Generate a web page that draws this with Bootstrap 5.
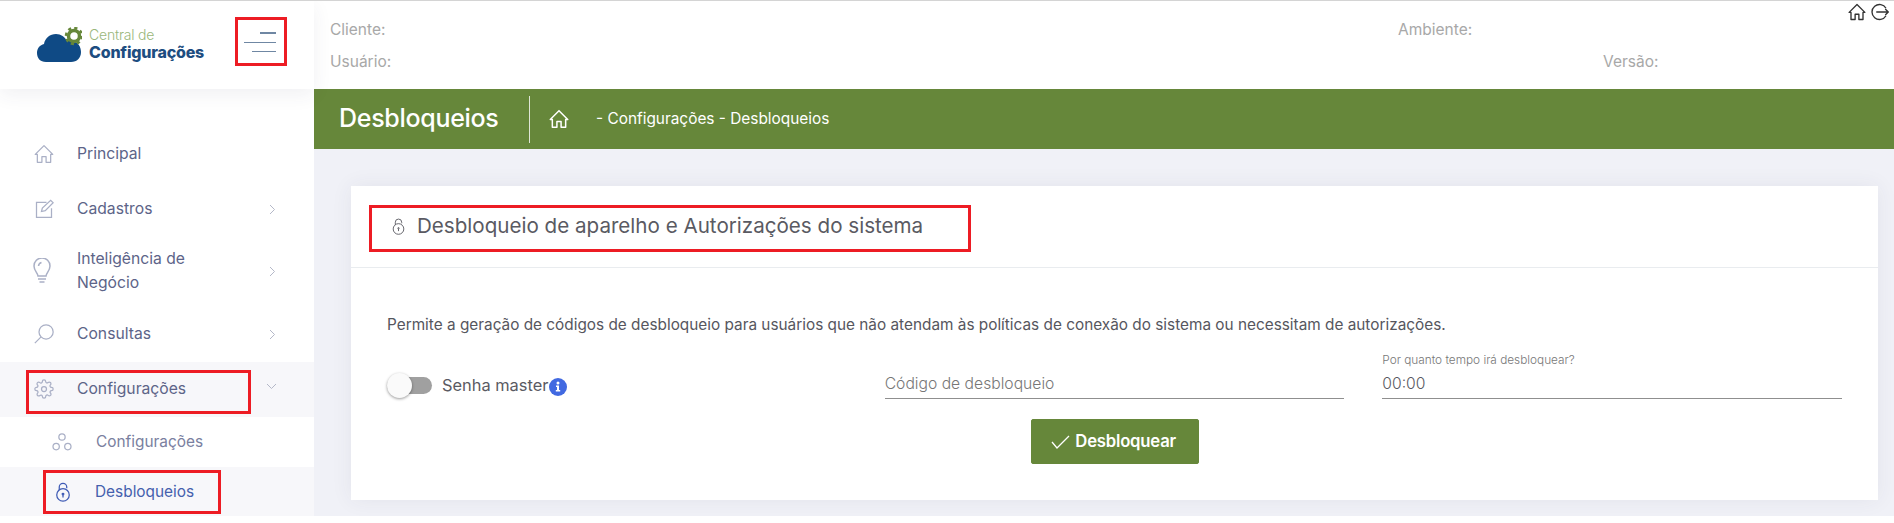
<!DOCTYPE html>
<html lang="pt-BR">
<head>
    <meta charset="UTF-8">
    <meta name="viewport" content="width=device-width, initial-scale=1.0">
    <title>Central de Configurações - Desbloqueios</title>
    <link href="https://cdn.jsdelivr.net/npm/bootstrap@5.3.0/dist/css/bootstrap.min.css" rel="stylesheet">
    <style>
        body { font-family: Inter, "Noto Sans", sans-serif; background: #fff; color: #5a5a62; }
        .mark-red { border: 3px solid #ed1c24; }
        .app-shell { height: 516px; overflow: hidden; border-top: 1px solid #d4d4d4; }

        .app-top { height: 88px; background: #fff; }
        .brand-area { width: 314px; flex: none; padding-left: 37px; position: relative; z-index: 2; box-shadow: 0 6px 18px rgba(60, 60, 90, .07); }
        .brand-text { margin-left: 7px; margin-top: -2px; line-height: 1; }
        .brand-small { font-size: 14px; color: #9ab77b; font-weight: 300; letter-spacing: -.2px; }
        .brand-big { font-size: 16px; font-weight: 800; color: #1d4d80; margin-top: 2px; letter-spacing: -.2px; }
        .menu-toggle { width: 52px; height: 49px; margin-left: 31px; margin-top: -7px; background: none; padding: 0 8px 0 0; display: flex; flex-direction: column; align-items: flex-end; justify-content: center; }
        .menu-toggle span { display: block; background: #6f87a3; height: 1px; margin-top: 8px; }
        .menu-toggle span:nth-child(1) { width: 16px; height: 2px; margin-top: 0; }
        .menu-toggle span:nth-child(2) { width: 32px; }
        .menu-toggle span:nth-child(3) { width: 24px; }
        .top-info { flex: 1; padding: 17px 0 0 16px; font-size: 15.5px; color: #a8a8a8; position: relative; }
        .info-line { height: 32px; }
        .info-ambiente { margin-left: 1068px; }
        .info-versao { margin-left: 1273px; }
        .top-actions { position: absolute; top: 2px; right: 5px; gap: 5px; }

        .side-panel { width: 314px; flex: none; padding-top: 37px; background: #fff; font-size: 15.7px; color: #5d6488; }
        .side-row { display: flex; align-items: center; min-height: 54px; padding-left: 34px; padding-right: 38px; }
        .side-row svg.ico { width: 20px; height: 20px; flex: none; margin-right: 23px; stroke: #aab0c6; fill: none; stroke-width: 1.5; }
        .side-row .arrow { width: 8px; height: 11px; margin-left: auto; flex: none; stroke: #b4b8c8; fill: none; stroke-width: 1; }
        .side-first { min-height: 56px; }
        .side-tall { min-height: 70px; line-height: 24px; }
        .side-tall .side-label { width: 150px; }
        .side-tall svg.ico { width: 18px; height: 26px; margin-left: -1px; margin-right: 26px; }
        .side-consult { min-height: 56px; }
        .side-open { background: #f7f7fa; height: 55px; min-height: 55px; padding-left: 26px; padding-top: 8px; align-items: flex-start; }
        .side-open .mark-red { width: 225px; height: 44px; flex: none; display: flex; align-items: center; padding: 0 0 6px 5px; }
        .side-open .arrow { margin-top: 11px; margin-left: 15px; width: 11px; height: 10px; }
        .side-sub { height: 50px; min-height: 50px; padding-left: 52px; color: #7a80a0; font-size: 15.4px; }
        .side-sub svg.ico { margin-right: 24px; }
        .side-active { height: 49px; min-height: 49px; padding-left: 43px; background: #f7f7fa; color: #4560ad; font-size: 15.4px; }
        .side-active .mark-red { width: 178px; height: 44px; display: flex; align-items: center; padding: 0 0 0 7px; }
        .side-active svg.ico { stroke: #3f5bb5; margin-right: 22px; }

        .main-area { flex: 1; background: #f0f1f7; min-width: 0; }
        .green-bar { height: 60px; background: #66873a; color: #fff; padding-left: 25px; }
        .green-title { font-size: 25px; font-weight: 500; letter-spacing: -.3px; width: 190px; }
        .green-sep { width: 1px; height: 47px; background: #dfe6d6; }
        .green-home { margin-left: 19px; }
        .green-crumb { font-size: 15.4px; font-weight: 400; margin-left: 27px; }
        .panel-box { margin: 37px 16px 16px 37px; border: 0; border-radius: 0; box-shadow: 0 0 20px rgba(60, 60, 90, .07); height: 314px; }
        .panel-head { height: 82px; padding: 19px 18px 0; background: #fff; border-bottom: 1px solid #e9ecef; border-radius: 0 !important; }
        .panel-title { width: 602px; height: 47px; display: flex; align-items: center; padding-left: 18px; font-size: 20.6px; font-weight: 400; color: #5a5a62; padding-bottom: 5px; }
        .panel-title svg { width: 17px; height: 19px; margin-right: 10px; stroke: #5a5a62; fill: none; stroke-width: 1.3; }
        .panel-body { padding: 46px 36px 0; }
        .panel-desc { font-size: 15.35px; color: #56565e; margin-bottom: 0; line-height: 22px; }
        .form-line { --bs-gutter-x: 38px; margin-top: 16px; }
        .toggle-track { display: block; position: relative; width: 45px; height: 17px; border-radius: 9px; background: #a0a0a0; flex: none; }
        .toggle-knob { position: absolute; left: 0; top: -4px; width: 25px; height: 25px; border-radius: 50%; background: #fafafa; box-shadow: 0 1px 3px rgba(0, 0, 0, .4); }
        .toggle-text { font-size: 16.4px; margin-left: 10px; color: #5a5a62; }
        .info-dot { width: 18px; height: 18px; margin-top: 4px; margin-left: 1px; flex: none; }
        .toggle-col { padding-top: 21px; }
        .code-col { padding-top: 18px; }
        .under-input { border: 0; border-bottom: 1px solid #8f8f8f; border-radius: 0; padding: 0 0 2px; height: 29px; font-size: 15.7px; background: transparent; color: #5a5a62; font-weight: 300; }
        .under-input::placeholder { color: #777; opacity: 1; }
        .tiny-label { font-size: 11.8px; color: #777; margin-top: 1px; margin-bottom: 3px; font-weight: 300; line-height: 14px; display: block; }
        .unlock-btn { background: #66873a; border-color: #66873a; color: #fff; width: 168px; height: 45px; font-size: 16.7px; font-weight: 600; margin-left: 146px; margin-top: 20px; border-radius: 2px; display: flex; align-items: center; justify-content: center; letter-spacing: -.2px; padding: 0; }
        .unlock-btn svg { width: 20px; height: 16px; margin-right: 4px; margin-left: -2px; stroke: #fff; fill: none; stroke-width: 1.3; }
    </style>
</head>
<body>
    <svg width="0" height="0" class="position-absolute">
        <defs>
            <symbol id="i-home" viewBox="0 0 24 24"><path d="M1.500 12.500 12 2l10.500 10.500h-2.500V22h-5.500v-7h-5v7H4v-9.500z" stroke-linejoin="round"/></symbol>
            <symbol id="i-unlock" viewBox="0 0 24 24"><circle cx="12" cy="15.500" r="7.500"/><path d="M7.500 9.500V6a4.500 4.500 0 0 1 9 0v1.500"/><circle cx="12" cy="14.500" r="1"/><path d="M12 15v3.500"/></symbol>
        </defs>
    </svg>

    <div class="app-shell d-flex flex-column">
        <header class="app-top d-flex">
            <div class="brand-area d-flex align-items-center">
                <svg width="45" height="36" viewBox="0 0 45 36" aria-hidden="true">
                    <path d="M9 35C3 35 0 31 0 26c0-5 3-8 7-9 1-6 6-10 12-10 5 0 9 3 11 7 2-1 4-1 6 0 5 1 8 6 8 11 0 6-4 10-10 10z" fill="#0f4a85"/>
                    <circle cx="37" cy="9" r="5.500" fill="#fff" stroke="#66873a" stroke-width="3.500"/>
                    <circle cx="37" cy="9" r="8" fill="none" stroke="#66873a" stroke-width="2.500" stroke-dasharray="3.200 3.080"/>
                </svg>
                <div class="brand-text">
                    <div class="brand-small">Central de</div>
                    <div class="brand-big">Configurações</div>
                </div>
                <button type="button" class="menu-toggle mark-red" aria-label="Menu"><span></span><span></span><span></span></button>
            </div>
            <div class="top-info">
                <div class="info-line d-flex"><span>Cliente:</span><span class="info-ambiente position-absolute">Ambiente:</span></div>
                <div class="info-line d-flex"><span>Usuário:</span><span class="info-versao position-absolute">Versão:</span></div>
                <div class="top-actions d-flex">
                    <svg width="18" height="18" viewBox="0 0 24 24" fill="none" stroke="#333" stroke-width="1.800"><use href="#i-home"/></svg>
                    <svg width="18" height="18" viewBox="0 0 24 24" fill="none" stroke="#333" stroke-width="1.800"><path d="M20 7a10 10 0 1 0 0 10"/><path d="M7 12h16M19 8l4 4-4 4"/></svg>
                </div>
            </div>
        </header>

        <div class="d-flex flex-grow-1" style="min-height:0">
            <nav class="side-panel">
                <div class="side-row side-first">
                    <svg class="ico"><use href="#i-home"/></svg><span>Principal</span>
                </div>
                <div class="side-row">
                    <svg class="ico" viewBox="0 0 24 24"><path d="M15 4H3v18h18V11"/><path d="M9 15l1-4L20 1.500l3 3L13.500 14z"/></svg><span>Cadastros</span>
                    <svg class="arrow" viewBox="0 0 8 11"><path d="M2 1l4.500 4.500L2 10"/></svg>
                </div>
                <div class="side-row side-tall">
                    <svg class="ico" viewBox="0 0 18 26"><path d="M5 18c0-3-4-5-4-10a8 8 0 0 1 16 0c0 5-4 7-4 10z"/><path d="M5 21h8M6.500 24h5M5.500 8a4 4 0 0 1 3-3.500"/></svg><span class="side-label">Inteligência de Negócio</span>
                    <svg class="arrow" viewBox="0 0 8 11"><path d="M2 1l4.500 4.500L2 10"/></svg>
                </div>
                <div class="side-row side-consult">
                    <svg class="ico" viewBox="0 0 24 24"><circle cx="14.500" cy="9.500" r="8.500"/><path d="M8.500 15.500 1 23"/></svg><span>Consultas</span>
                    <svg class="arrow" viewBox="0 0 8 11"><path d="M2 1l4.500 4.500L2 10"/></svg>
                </div>
                <div class="side-row side-open">
                    <div class="mark-red">
                        <svg class="ico" viewBox="0 0 24 24"><circle cx="12" cy="12" r="3"/><path d="M19.400 15a1.650 1.650 0 0 0 .33 1.820l.06.06a2 2 0 0 1 0 2.830 2 2 0 0 1-2.830 0l-.06-.06a1.650 1.650 0 0 0-1.820-.33 1.650 1.650 0 0 0-1 1.510V21a2 2 0 0 1-2 2 2 2 0 0 1-2-2v-.09A1.650 1.650 0 0 0 9 19.400a1.650 1.650 0 0 0-1.820.33l-.06.06a2 2 0 0 1-2.830 0 2 2 0 0 1 0-2.830l.06-.06a1.650 1.650 0 0 0 .33-1.820 1.650 1.650 0 0 0-1.510-1H3a2 2 0 0 1-2-2 2 2 0 0 1 2-2h.09A1.650 1.650 0 0 0 4.600 9a1.650 1.650 0 0 0-.33-1.820l-.06-.06a2 2 0 0 1 0-2.830 2 2 0 0 1 2.830 0l.06.06a1.650 1.650 0 0 0 1.820.33H9a1.650 1.650 0 0 0 1-1.510V3a2 2 0 0 1 2-2 2 2 0 0 1 2 2v.09a1.650 1.650 0 0 0 1 1.510 1.650 1.650 0 0 0 1.820-.33l.06-.06a2 2 0 0 1 2.830 0 2 2 0 0 1 0 2.830l-.06.06a1.650 1.650 0 0 0-.33 1.820V9a1.650 1.650 0 0 0 1.510 1H21a2 2 0 0 1 2 2 2 2 0 0 1-2 2h-.09a1.650 1.650 0 0 0-1.510 1z"/></svg><span>Configurações</span>
                    </div>
                    <svg class="arrow" viewBox="0 0 11 10"><path d="M1 3l4.500 4.500L10 3"/></svg>
                </div>
                <div class="side-row side-sub">
                    <svg class="ico" viewBox="0 0 24 24" stroke-width="2"><circle cx="12" cy="6" r="3.800"/><circle cx="5" cy="17.500" r="3.800"/><circle cx="19" cy="17.500" r="3.800"/></svg><span>Configurações</span>
                </div>
                <div class="side-row side-active">
                    <div class="mark-red">
                        <svg class="ico"><use href="#i-unlock"/></svg><span>Desbloqueios</span>
                    </div>
                </div>
            </nav>

            <main class="main-area">
                <div class="green-bar d-flex align-items-center">
                    <div class="green-title">Desbloqueios</div>
                    <div class="green-sep"></div>
                    <svg width="20" height="20" viewBox="0 0 24 24" fill="none" stroke="#fff" stroke-width="1.800" class="green-home"><use href="#i-home"/></svg>
                    <div class="green-crumb">- Configurações - Desbloqueios</div>
                </div>
                <div class="card panel-box">
                    <div class="card-header panel-head">
                        <div class="panel-title mark-red">
                            <svg><use href="#i-unlock"/></svg>Desbloqueio de aparelho e Autorizações do sistema
                        </div>
                    </div>
                    <div class="card-body panel-body">
                        <p class="panel-desc">Permite a geração de códigos de desbloqueio para usuários que não atendam às políticas de conexão do sistema ou necessitam de autorizações.</p>
                        <div class="row form-line">
                            <div class="col-4 toggle-col">
                                <span class="d-flex align-items-center">
                                    <span class="toggle-track"><span class="toggle-knob"></span></span>
                                    <span class="toggle-text">Senha master</span>
                                    <svg class="info-dot" viewBox="0 0 18 18"><circle cx="9" cy="9" r="9" fill="#4169e1"/><circle cx="9" cy="5" r="1.500" fill="#fff"/><path d="M7 7.500h3V12h1.200v1.500H6.800V12H8V9H7z" fill="#fff"/></svg>
                                </span>
                            </div>
                            <div class="col-4 code-col">
                                <input class="form-control under-input" type="text" placeholder="Código de desbloqueio">
                                <button type="button" class="btn unlock-btn">
                                    <svg viewBox="0 0 20 16"><path d="M1 8l5 6L18 2"/></svg>Desbloquear
                                </button>
                            </div>
                            <div class="col-4">
                                <label class="tiny-label">Por quanto tempo irá desbloquear?</label>
                                <input class="form-control under-input" type="text" value="00:00">
                            </div>
                        </div>
                    </div>
                </div>
            </main>
        </div>
    </div>

    <script src="https://cdn.jsdelivr.net/npm/bootstrap@5.3.0/dist/js/bootstrap.bundle.min.js"></script>
</body>
</html>
